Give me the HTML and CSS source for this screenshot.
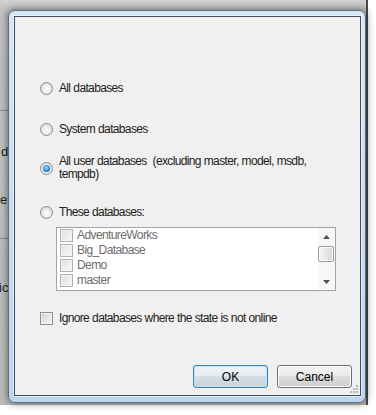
FILE: index.html
```html
<!DOCTYPE html>
<html>
<head>
<meta charset="utf-8">
<link rel="stylesheet" href="styles.css">
</head>
<body>
<div class="desk">
  <div class="under">
    <div class="behind">
      <div class="rule r1"></div>
      <div class="frag f1">d</div>
      <div class="frag f2">e</div>
      <div class="rule r2"></div>
      <div class="frag f3">ic</div>
    </div>
    <div class="dialog">
      <div class="client">
        <div class="opt o1"><span class="radio"></span><span class="lbl">All databases</span></div>
        <div class="opt o2"><span class="radio"></span><span class="lbl">System databases</span></div>
        <div class="opt o3"><span class="radio on"></span><span class="lbl">All user databases&nbsp; (excluding master, model, msdb,<br>tempdb)</span></div>
        <div class="opt o4"><span class="radio"></span><span class="lbl">These databases:</span></div>
        <div class="listbox">
          <ul class="items">
            <li><span class="cb"></span>AdventureWorks</li>
            <li><span class="cb"></span>Big_Database</li>
            <li><span class="cb"></span>Demo</li>
            <li><span class="cb"></span>master</li>
          </ul>
          <div class="vscroll">
            <div class="arrow"><svg width="7" height="4" viewBox="0 0 7 4"><polygon points="0,4 3.5,0 7,4" fill="#4f4f4f"/></svg></div>
            <div class="track"><div class="thumb"></div></div>
            <div class="arrow"><svg width="7" height="4" viewBox="0 0 7 4"><polygon points="0,0 7,0 3.5,4" fill="#4f4f4f"/></svg></div>
          </div>
        </div>
        <div class="opt o5"><span class="cb"></span><span class="lbl">Ignore databases where the state is not online</span></div>
        <div class="buttons">
          <button class="btn default">OK</button>
          <button class="btn">Cancel</button>
        </div>
        <div class="grip">
          <svg width="10" height="10" viewBox="0 0 10 10">
            <rect x="7" y="1" width="2" height="2" fill="#b9b9b9"/>
            <rect x="4" y="4" width="2" height="2" fill="#b9b9b9"/>
            <rect x="7" y="4" width="2" height="2" fill="#b9b9b9"/>
            <rect x="1" y="7" width="2" height="2" fill="#b9b9b9"/>
            <rect x="4" y="7" width="2" height="2" fill="#b9b9b9"/>
            <rect x="7" y="7" width="2" height="2" fill="#b9b9b9"/>
          </svg>
        </div>
      </div>
    </div>
  </div>
</div>
</body>
</html>
```

FILE: styles.css
```css
* { box-sizing: border-box; margin: 0; padding: 0; }
html, body { width: 376px; height: 415px; overflow: hidden; background: #fff; }
body { font-family: "Liberation Sans", Arial, sans-serif; font-size: 12px; color: #1c1c1c; }

.desk { width: 376px; height: 415px; background: #fff; }

.under {
  display: flex;
  width: 368px;
  height: 405px;
  background: linear-gradient(#d2d2d2, #c2c2c2 10px, #bcbcbc);
  border-right: 2px solid #4a4a4a;
}

.behind {
  width: 8px;
  flex: none;
  display: flex;
  flex-direction: column;
  overflow: hidden;
  color: #222;
  font-size: 13px;
  line-height: 14px;
}
.rule { width: 8px; height: 1px; background: #8c8c8c; flex: none; }
.r1 { margin-top: 110px; }
.f1 { margin-top: 34px; padding-left: 1px; }
.f2 { margin-top: 34px; }
.r2 { margin-top: 31px; }
.f3 { margin-top: 42px; margin-left: -1px; white-space: nowrap; }

.dialog {
  flex: none;
  width: 358px;
  height: 393px;
  margin-top: 10px;
  border: 1px solid #5b6d80;
  border-radius: 7px;
  background: linear-gradient(#d6e6f6, #bdd6ee);
  padding: 5px 4px 6px 5px;
  box-shadow: 0 0 7px 1px rgba(0, 0, 0, 0.45);
}

.client {
  position: relative;
  height: 100%;
  border: 1px solid #3f4d5b;
  background: #f0f0f0;
  display: flex;
  flex-direction: column;
  padding-top: 63px;
  box-shadow: 0 0 0 1px rgba(255, 255, 255, 0.55);
}

.opt {
  display: flex;
  align-items: center;
  margin-left: 25px;
  height: 16px;
  line-height: 16px;
  flex: none;
}
.o2 { margin-top: 25px; }
.o3 { margin-top: 18px; height: 26px; line-height: 13px; }
.o4 { margin-top: 23px; }
.o5 { margin-top: 19px; }

.lbl { margin-left: 6px; letter-spacing: -0.65px; word-spacing: 0.3px; white-space: nowrap; }

.radio {
  position: relative;
  flex: none;
  width: 13px;
  height: 13px;
  border-radius: 50%;
  border: 1px solid #8b8b8b;
  background: radial-gradient(circle at 50% 55%, #ffffff 0, #ececec 45%, #cdcdcd 100%);
}
.radio.on::after {
  content: "";
  position: absolute;
  left: 2px;
  top: 2px;
  width: 7px;
  height: 7px;
  border-radius: 50%;
  background: radial-gradient(circle at 45% 40%, #a8e4ff 0, #2f8ad8 55%, #0c4790 100%);
}

.cb {
  flex: none;
  width: 13px;
  height: 13px;
  border: 1px solid #8e8f8f;
  background: linear-gradient(135deg, #d2d2d2, #f7f7f7);
  box-shadow: inset 0 0 0 1px #f3f3f3;
}

.listbox {
  flex: none;
  display: flex;
  margin-top: 7px;
  margin-left: 41px;
  width: 280px;
  height: 64px;
  border: 1px solid #a3a3a3;
  background: #fff;
}
.items { list-style: none; flex: 1; padding-left: 3px; }
.items li {
  display: flex;
  align-items: center;
  height: 15px;
  line-height: 15px;
  color: #6d6d6d;
  letter-spacing: -0.6px;
}
.items .cb {
  margin-right: 4px;
  border-color: #b0b0b0;
  background: linear-gradient(135deg, #e0e0e0, #f8f8f8);
}

.vscroll {
  width: 17px;
  flex: none;
  display: flex;
  flex-direction: column;
  background: #f7f7f7;
}
.arrow {
  height: 17px;
  flex: none;
  display: flex;
  align-items: center;
  justify-content: center;
}
.track { flex: 1; padding: 1px 1px 0 0; }
.thumb {
  height: 16px;
  border: 1px solid #9c9c9c;
  border-radius: 2px;
  background: linear-gradient(90deg, #f6f6f6, #e6e6e6 50%, #d6d6d6);
  box-shadow: inset 0 0 0 1px #fbfbfb;
}

.buttons {
  display: flex;
  justify-content: flex-end;
  gap: 9px;
  margin-top: 39px;
  padding-right: 8px;
  flex: none;
}
.btn {
  width: 75px;
  height: 23px;
  font-family: "Liberation Sans", Arial, sans-serif;
  font-size: 12px;
  color: #000;
  border: 1px solid #707070;
  border-radius: 3px;
  background: linear-gradient(#f2f2f2 0, #ebebeb 50%, #dddddd 50%, #cfcfcf 100%);
  box-shadow: inset 0 0 0 1px #fbfbfb;
}
.btn.default {
  border-color: #3c7fb1;
  background: linear-gradient(#eef3f7 0, #e6ecf1 50%, #d6dee5 50%, #c9d3dc 100%);
  box-shadow: inset 0 0 0 1px #c0e4f8;
}

.grip {
  position: absolute;
  right: 1px;
  bottom: 1px;
  width: 10px;
  height: 10px;
}
.grip svg { display: block; }
```
